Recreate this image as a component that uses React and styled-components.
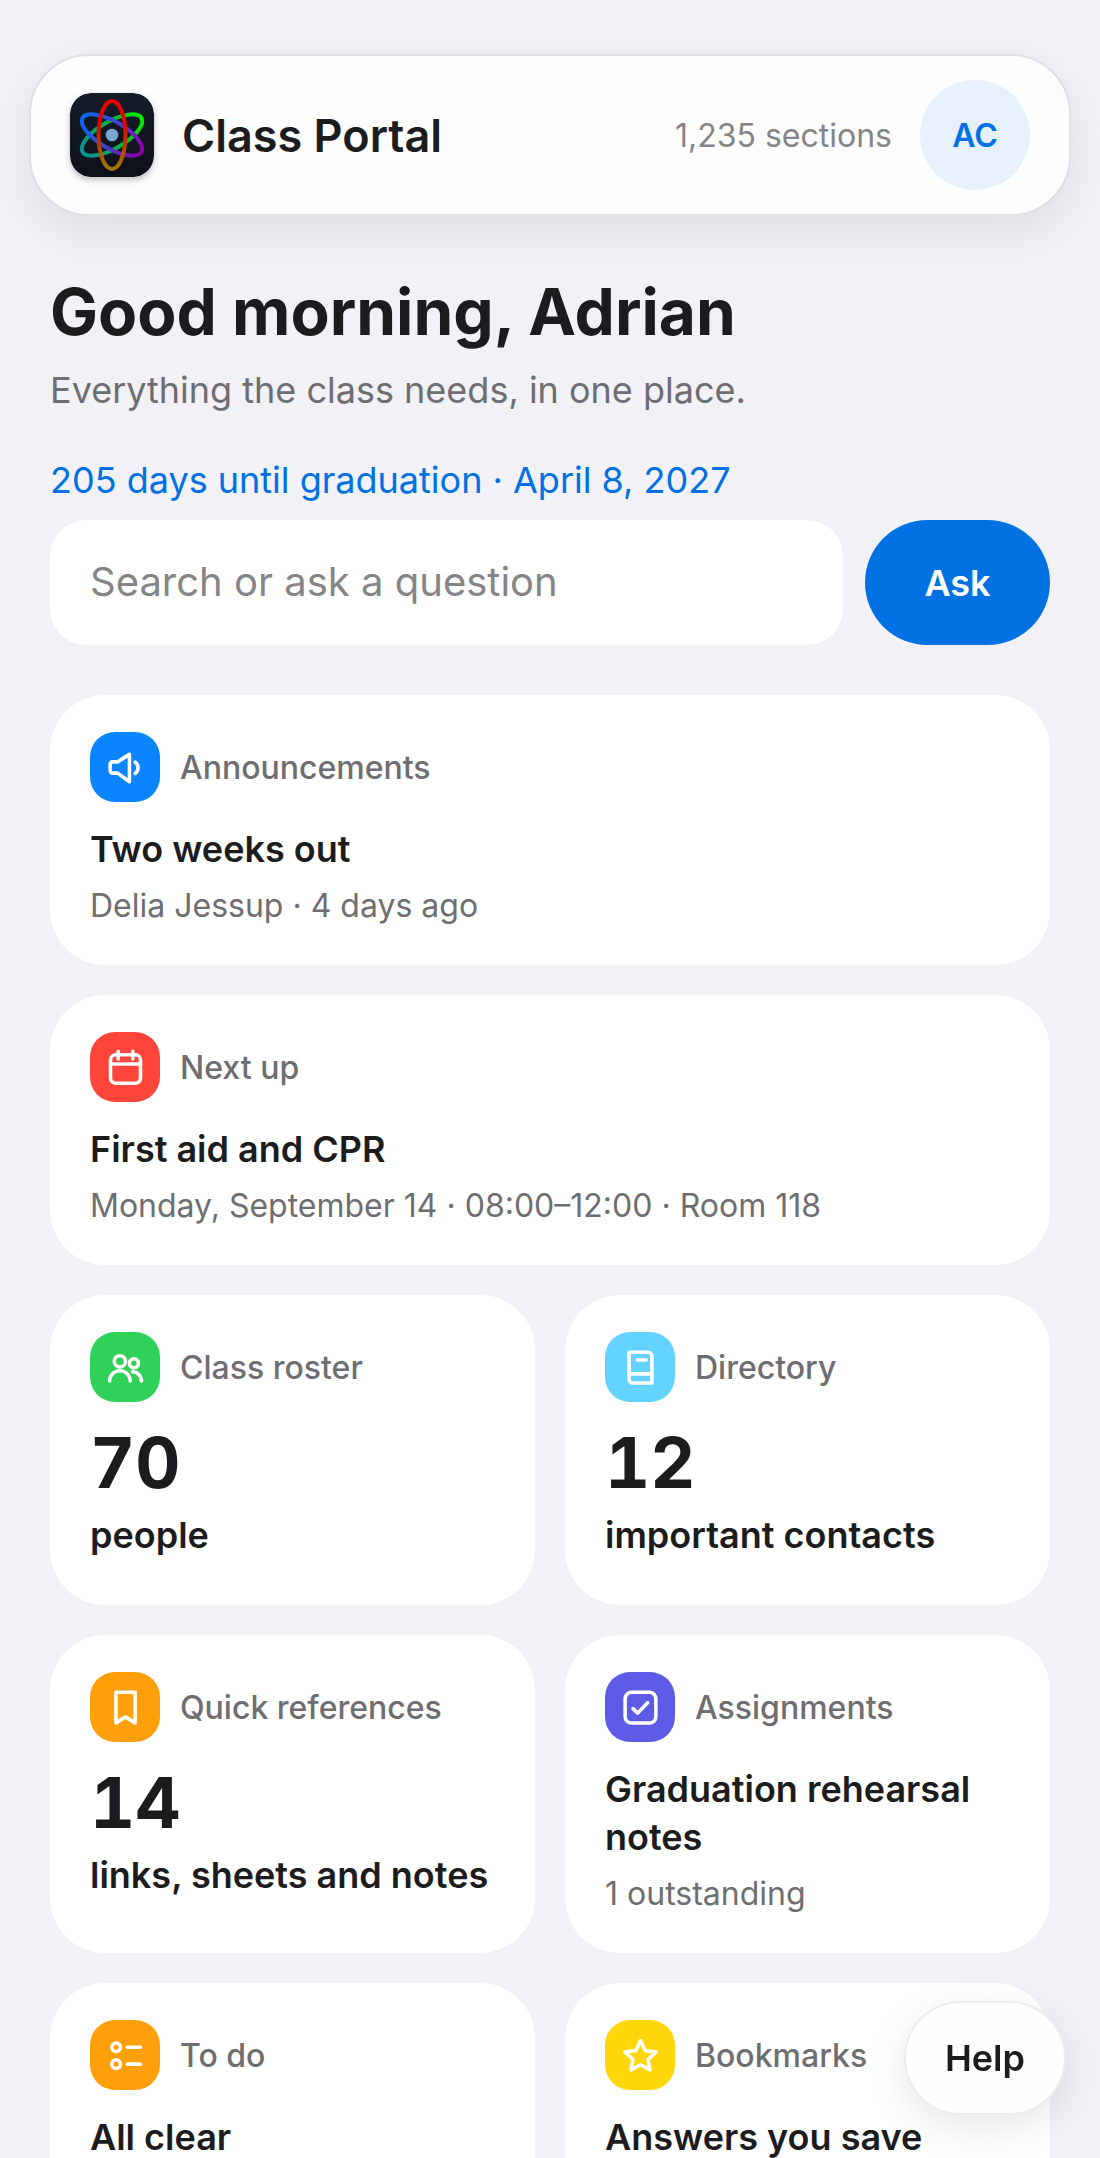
import { useState } from "react";
import styled, { createGlobalStyle } from "styled-components";

const AnnounceIcon = () => (
  <Glyph viewBox="0 0 24 24">
    <path d="M5.1 9h2.7l6.3-4v14.6L7.8 15H5.1a1.3 1.3 0 0 1-1.3-1.3v-3.4A1.3 1.3 0 0 1 5.1 9z" />
    <path d="M17.2 9.1a3.9 3.9 0 0 1 0 6.1" />
  </Glyph>
);

const CalendarIcon = () => (
  <Glyph viewBox="0 0 24 24">
    <rect x="4" y="5.2" width="16" height="15.2" rx="2.8" />
    <path d="M4 10.1h16M8.1 3.3v4.1M15.9 3.3v4.1" />
  </Glyph>
);

const PeopleIcon = () => (
  <Glyph viewBox="0 0 24 24">
    <circle cx="9" cy="8.7" r="3" />
    <circle cx="16.5" cy="9.7" r="2.4" />
    <path d="M3.5 19.2a5.5 5.5 0 0 1 11 0M15.6 14.3a4.9 4.9 0 0 1 4.9 4.9" />
  </Glyph>
);

const BookIcon = () => (
  <Glyph viewBox="0 0 24 24">
    <path d="M5.9 3.9h10.2a2 2 0 0 1 2 2v14.4H7.9a2 2 0 0 1-2-2z" />
    <path d="M5.9 15.4h12.2M10.2 8h4.9" />
  </Glyph>
);

const BookmarkIcon = () => (
  <Glyph viewBox="0 0 24 24">
    <path d="M6.9 3.9h10.2v16.3L12 17l-5.1 3.2z" />
  </Glyph>
);

const CheckIcon = () => (
  <Glyph viewBox="0 0 24 24">
    <rect x="3.8" y="3.9" width="16.4" height="16.4" rx="3.4" />
    <path d="M8 12.6l2.5 2.4 5.3-5.5" />
  </Glyph>
);

const TodoIcon = () => (
  <Glyph viewBox="0 0 24 24">
    <circle cx="7" cy="7.6" r="2.3" />
    <circle cx="7" cy="16.6" r="2.3" />
    <path d="M12.9 7.6H20M12.9 16.6H20" />
  </Glyph>
);

const StarIcon = () => (
  <Glyph viewBox="0 0 24 24">
    <path d="M12 4.1l2.5 5.3 5.8.7-4.3 4 1.1 5.6L12 16.9l-5.1 2.8L8 14.1l-4.3-4 5.8-.7z" />
  </Glyph>
);

const Logo = () => (
  <LogoSvg viewBox="0 0 84 84" aria-hidden="true">
    <defs>
      <linearGradient id="tile" x1="0" y1="0" x2="0" y2="1">
        <stop offset="0" stopColor="#151c28" />
        <stop offset="1" stopColor="#0d1119" />
      </linearGradient>
      <linearGradient id="red" x1="0" y1="0" x2="0" y2="1">
        <stop offset="0" stopColor="#f00000" />
        <stop offset="0.35" stopColor="#d80a00" />
        <stop offset="1" stopColor="#a07800" />
      </linearGradient>
      <linearGradient id="green" x1="0" y1="0" x2="0" y2="1">
        <stop offset="0" stopColor="#00ee00" />
        <stop offset="0.3" stopColor="#06c02c" />
        <stop offset="1" stopColor="#0a8f98" />
      </linearGradient>
      <linearGradient id="blue" x1="0" y1="0" x2="0" y2="1">
        <stop offset="0" stopColor="#0868f0" />
        <stop offset="0.5" stopColor="#4440d0" />
        <stop offset="1" stopColor="#8a00a8" />
      </linearGradient>
    </defs>
    <rect width="84" height="84" rx="21" fill="url(#tile)" />
    <g fill="none" strokeWidth="4">
      <ellipse cx="42" cy="42" rx="13.5" ry="34" stroke="url(#green)" transform="rotate(60 42 42)" />
      <ellipse cx="42" cy="42" rx="13.5" ry="34" stroke="url(#blue)" transform="rotate(-60 42 42)" />
      <ellipse cx="42" cy="42" rx="13.5" ry="34" stroke="url(#red)" />
    </g>
    <circle cx="42" cy="42" r="6.3" fill="#7ba6d3" />
  </LogoSvg>
);

const cards = [
  {
    label: "Announcements",
    color: "#0a84ff",
    icon: AnnounceIcon,
    title: "Two weeks out",
    meta: "Delia Jessup · 4 days ago",
    wide: true,
  },
  {
    label: "Next up",
    color: "#ff453a",
    icon: CalendarIcon,
    title: "First aid and CPR",
    meta: "Monday, September 14 · 08:00–12:00 · Room 118",
    wide: true,
  },
  { label: "Class roster", color: "#30d158", icon: PeopleIcon, count: 70, title: "people" },
  { label: "Directory", color: "#64d2ff", icon: BookIcon, count: 12, title: "important contacts" },
  { label: "Quick references", color: "#ff9f0a", icon: BookmarkIcon, count: 14, title: "links, sheets and notes" },
  {
    label: "Assignments",
    color: "#5e5ce6",
    icon: CheckIcon,
    title: "Graduation rehearsal notes",
    meta: "1 outstanding",
  },
  { label: "To do", color: "#ff9f0a", icon: TodoIcon, title: "All clear" },
  { label: "Bookmarks", color: "#ffd60a", icon: StarIcon, title: "Answers you save" },
];

const CardComp = ({ card }) => {
  const Icon = card.icon;
  return (
    <Card href="#" $wide={card.wide}>
      <CardHead>
        <IconBox $color={card.color}>
          <Icon />
        </IconBox>
        <CardLabel>{card.label}</CardLabel>
      </CardHead>
      <CardBody>
        {card.count ? <Count>{card.count}</Count> : null}
        <CardTitle>{card.title}</CardTitle>
        {card.meta ? <Meta>{card.meta}</Meta> : null}
      </CardBody>
    </Card>
  );
};

const App = () => {
  const [query, setQuery] = useState("");

  return (
    <>
      <GlobalStyle />
      <Page>
        <Header>
          <Logo />
          <Brand>Class Portal</Brand>
          <Sections>1,235 sections</Sections>
          <Avatar type="button" aria-label="Account">
            AC
          </Avatar>
        </Header>
        <Main>
          <Greeting>Good morning, Adrian</Greeting>
          <Tagline>Everything the class needs, in one place.</Tagline>
          <Countdown>205 days until graduation · April 8, 2027</Countdown>
          <SearchForm onSubmit={(e) => e.preventDefault()}>
            <SearchInput
              type="text"
              aria-label="Search or ask a question"
              placeholder="Search or ask a question"
              value={query}
              onChange={(e) => setQuery(e.target.value)}
            />
            <AskButton type="submit">Ask</AskButton>
          </SearchForm>
          <CardGrid>
            {cards.map((card) => (
              <CardComp key={card.label} card={card} />
            ))}
          </CardGrid>
        </Main>
        <HelpButton type="button">Help</HelpButton>
      </Page>
    </>
  );
};

export default App;

const GlobalStyle = createGlobalStyle`
  * {
    box-sizing: border-box;
  }
  body {
    margin: 0;
    background: #f1f1f6;
    color: #1c1c1e;
    font-family: Inter, "Liberation Sans", sans-serif;
    -webkit-font-smoothing: antialiased;
  }
  h1, p {
    margin: 0;
  }
  button, input {
    font-family: inherit;
    border: none;
  }
`;

const Page = styled.div`
  height: 100vh;
  padding-top: 54px;
  overflow-y: auto;
  scrollbar-width: none;
`;

const Header = styled.header`
  display: flex;
  align-items: center;
  margin: 0 29px;
  padding: 24px 39px;
  border: 2px solid #e0e0e4;
  border-radius: 60px;
  background: #fdfdfe;
  box-shadow: 0 16px 48px rgba(0, 0, 0, 0.08);
`;

const LogoSvg = styled.svg`
  width: 84px;
  height: 84px;
  border-radius: 21px;
  box-shadow: 0 3px 6px rgba(0, 0, 0, 0.25);
`;

const Brand = styled.div`
  flex: 1;
  margin-left: 28px;
  font-size: 45px;
  font-weight: 600;
`;

const Sections = styled.span`
  margin-right: 28px;
  color: #858588;
  font-size: 32px;
`;

const Avatar = styled.button`
  width: 110px;
  height: 110px;
  padding: 0;
  border-radius: 50%;
  background: #e6f1fb;
  color: #0071e3;
  font-size: 32px;
  font-weight: 600;
`;

const Main = styled.main`
  padding: 60px 50px;
`;

const Greeting = styled.h1`
  font-size: 64px;
  font-weight: 700;
  line-height: 72px;
`;

const Tagline = styled.p`
  margin-top: 18px;
  color: #6e6e72;
  font-size: 36px;
  line-height: 48px;
`;

const Countdown = styled.p`
  margin-top: 42px;
  color: #0071e3;
  font-size: 36px;
  line-height: 48px;
`;

const SearchForm = styled.form`
  display: flex;
  gap: 22px;
  margin-top: 16px;
`;

const SearchInput = styled.input`
  flex: 1;
  min-width: 0;
  height: 125px;
  padding: 0 40px 2px;
  border-radius: 36px;
  background: #fff;
  color: #1c1c1e;
  font-size: 40px;
  &::placeholder {
    color: #858588;
    opacity: 1;
  }
`;

const AskButton = styled.button`
  width: 185px;
  border-radius: 63px;
  background: #0071e3;
  color: #fff;
  font-size: 36px;
  font-weight: 600;
`;

const CardGrid = styled.section`
  display: grid;
  grid-template-columns: 1fr 1fr;
  gap: 30px;
  margin-top: 50px;
`;

const Card = styled.a`
  grid-column: ${(props) => (props.$wide ? "1 / -1" : "auto")};
  min-height: ${(props) => (props.$wide ? "270px" : "310px")};
  padding: 37px 40px;
  border-radius: 55px;
  background: #fff;
  color: inherit;
  text-decoration: none;
`;

const CardHead = styled.div`
  display: flex;
  align-items: center;
  gap: 20px;
`;

const IconBox = styled.span`
  display: flex;
  align-items: center;
  justify-content: center;
  width: 70px;
  height: 70px;
  border-radius: 25px;
  background: ${(props) => props.$color};
`;

const Glyph = styled.svg`
  width: 45px;
  height: 45px;
  fill: none;
  stroke: #fff;
  stroke-width: 1.9;
  stroke-linecap: round;
  stroke-linejoin: round;
`;

const CardLabel = styled.span`
  color: #6e6e72;
  font-size: 32px;
  font-weight: 500;
`;

const CardBody = styled.div`
  display: flex;
  flex-direction: column;
  gap: 11px;
  margin-top: 23px;
`;

const Count = styled.div`
  font-size: 70px;
  font-weight: 700;
  line-height: 75px;
  font-variant-numeric: tabular-nums;
`;

const CardTitle = styled.div`
  font-size: 36px;
  font-weight: 600;
  line-height: 48px;
`;

const Meta = styled.div`
  color: #6e6e72;
  font-size: 32px;
  line-height: 44px;
`;

const HelpButton = styled.button`
  position: fixed;
  right: 34px;
  bottom: 43px;
  padding: 32px 39px;
  border: 2px solid #ececee;
  border-radius: 57px;
  background: #fefefe;
  color: #1c1c1e;
  font-size: 36px;
  font-weight: 600;
  line-height: 46px;
  box-shadow: 0 12px 40px rgba(0, 0, 0, 0.1);
`;
